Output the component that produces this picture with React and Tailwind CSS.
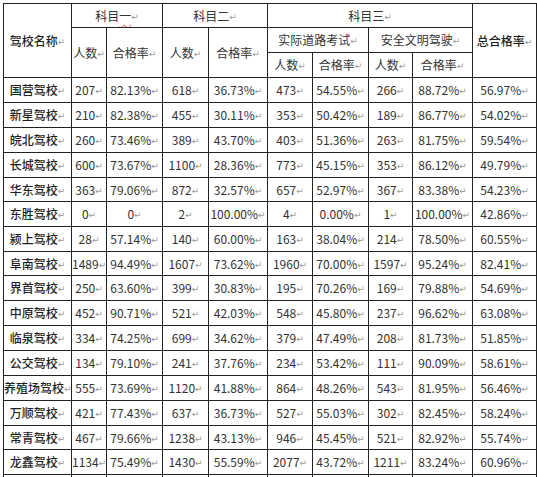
import React from "react";

const rows = [
  ["国营驾校", "207", "82.13%", "618", "36.73%", "473", "54.55%", "266", "88.72%", "56.97%", "h-[25px]"],
  ["新星驾校", "210", "82.38%", "455", "30.11%", "353", "50.42%", "189", "86.77%", "54.02%", "h-[25px]"],
  ["皖北驾校", "260", "73.46%", "389", "43.70%", "403", "51.36%", "263", "81.75%", "59.54%", "h-[25px]"],
  ["长城驾校", "600", "73.67%", "1100", "28.36%", "773", "45.15%", "353", "86.12%", "49.79%", "h-[25px]"],
  ["华东驾校", "363", "79.06%", "872", "32.57%", "657", "52.97%", "367", "83.38%", "54.23%", "h-[24px]"],
  ["东胜驾校", "0", "0", "2", "100.00%", "4", "0.00%", "1", "100.00%", "42.86%", "h-[25px]"],
  ["颍上驾校", "28", "57.14%", "140", "60.00%", "163", "38.04%", "214", "78.50%", "60.55%", "h-[25px]"],
  ["阜南驾校", "1489", "94.49%", "1607", "73.62%", "1960", "70.00%", "1597", "95.24%", "82.41%", "h-[24px]"],
  ["界首驾校", "250", "63.60%", "399", "30.83%", "195", "70.26%", "169", "79.88%", "54.69%", "h-[25px]"],
  ["中原驾校", "452", "90.71%", "521", "42.03%", "548", "45.80%", "237", "96.62%", "63.08%", "h-[25px]"],
  ["临泉驾校", "334", "74.25%", "699", "34.62%", "379", "47.49%", "208", "81.73%", "51.85%", "h-[25px]"],
  ["公交驾校", "134", "79.10%", "241", "37.76%", "234", "53.42%", "111", "90.09%", "58.61%", "h-[25px]"],
  ["养殖场驾校", "555", "73.69%", "1120", "41.88%", "864", "48.26%", "543", "81.95%", "56.46%", "h-[25px]"],
  ["万顺驾校", "421", "77.43%", "637", "36.73%", "527", "55.03%", "302", "82.45%", "58.24%", "h-[25px]"],
  ["常青驾校", "467", "79.66%", "1238", "43.13%", "946", "45.45%", "521", "82.92%", "55.74%", "h-[24px]"],
  ["龙鑫驾校", "1134", "75.49%", "1430", "55.59%", "2077", "43.72%", "1211", "83.24%", "60.96%", "h-[25px]"],
];

// Word paragraph mark after each cell text
const Mark = () => (
  <span className="text-[9px] font-normal text-[#9a9a9a] font-['DejaVu_Sans',sans-serif] align-[1px]">↵</span>
);

const Cell = ({ children, className = "", ...rest }) => (
  <td
    {...rest}
    className={
      "border border-[#222] p-0 text-center whitespace-nowrap overflow-hidden " + className
    }
  >
    {children}
    <Mark />
  </td>
);

export default function App() {
  return (
    <div className="w-[537px] h-[477px] bg-white overflow-hidden pt-[3px] pl-[3px]">
      <table className="table-fixed border-collapse w-[533px] text-[12px] leading-none text-[#333] font-['Noto_Sans_CJK_SC',sans-serif]">
        <colgroup>
          <col className="w-[68px]" />
          <col className="w-[35px]" />
          <col className="w-[56px]" />
          <col className="w-[46px]" />
          <col className="w-[59px]" />
          <col className="w-[45px]" />
          <col className="w-[56px]" />
          <col className="w-[44px]" />
          <col className="w-[60px]" />
          <col className="w-[64px]" />
        </colgroup>
        <thead>
          <tr className="h-[24px]">
            <Cell rowSpan={3} className="text-[#1f1f1f] font-medium">驾校名称</Cell>
            <Cell colSpan={2}>
              科目
              <span className="underline decoration-wavy decoration-[#e05050] decoration-1 underline-offset-[3px]">一</span>
            </Cell>
            <Cell colSpan={2}>科目二</Cell>
            <Cell colSpan={4}>科目三</Cell>
            <Cell rowSpan={3} className="text-[#1f1f1f] font-medium">总合格率</Cell>
          </tr>
          <tr className="h-[25px]">
            <Cell rowSpan={2}>人数</Cell>
            <Cell rowSpan={2}>合格率</Cell>
            <Cell rowSpan={2}>人数</Cell>
            <Cell rowSpan={2}>合格率</Cell>
            <Cell colSpan={2}>实际道路考试</Cell>
            <Cell colSpan={2}>安全文明驾驶</Cell>
          </tr>
          <tr className="h-[25px]">
            <Cell>人数</Cell>
            <Cell>合格率</Cell>
            <Cell>人数</Cell>
            <Cell>合格率</Cell>
          </tr>
        </thead>
        <tbody>
          {rows.map((r) => (
            <tr key={r[0]} className={r[10]}>
              <Cell className="text-[#1f1f1f] font-medium">{r[0]}</Cell>
              {r.slice(1, 10).map((v, i) => (
                <Cell key={i}>{v}</Cell>
              ))}
            </tr>
          ))}
          <tr className="h-[25px]">
            {Array.from({ length: 10 }).map((_, i) => (
              <td key={i} className="border border-[#222]" />
            ))}
          </tr>
        </tbody>
      </table>
    </div>
  );
}
